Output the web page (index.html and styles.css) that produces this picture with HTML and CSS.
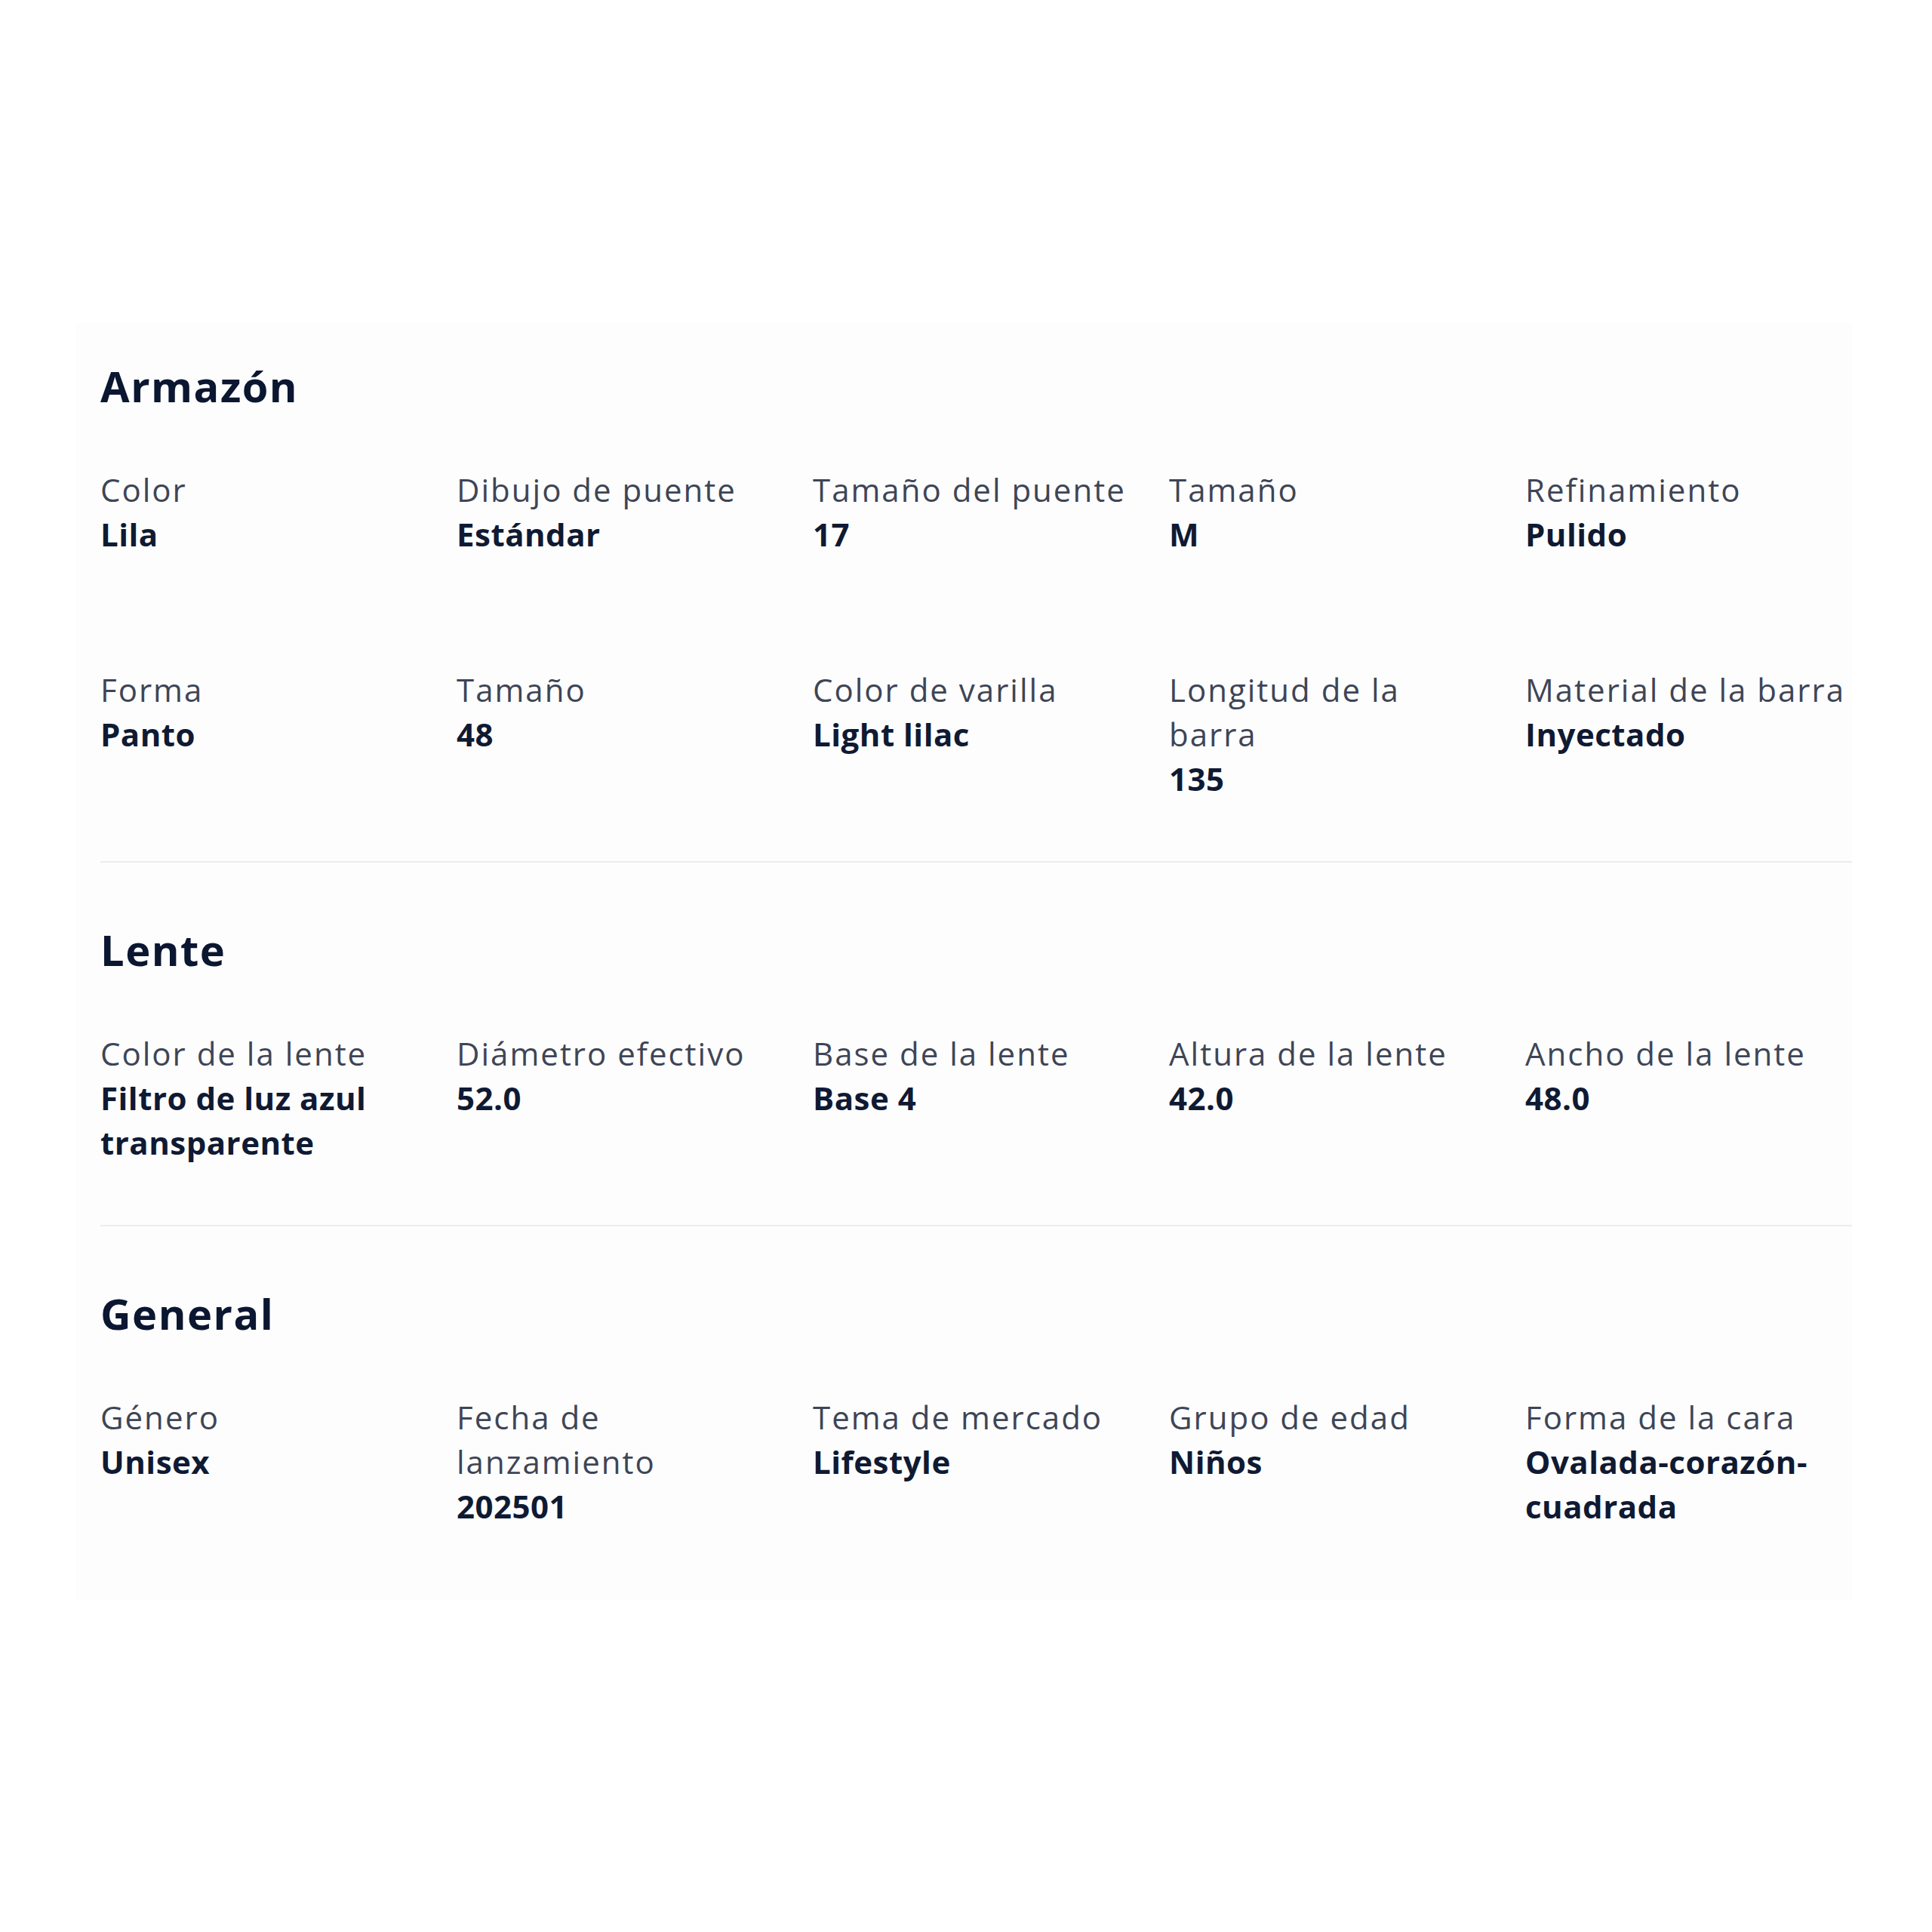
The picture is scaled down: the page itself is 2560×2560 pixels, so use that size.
FILE: index.html
```html
<!DOCTYPE html>
<html lang="es">
<head>
<meta charset="utf-8">
<title>Especificaciones</title>
<link rel="stylesheet" href="styles.css">
</head>
<body>
<div class="card">
  <section class="section">
    <h2 class="title">Armazón</h2>
    <div class="grid">
      <div class="item"><div class="label">Color</div><div class="value">Lila</div></div>
      <div class="item"><div class="label">Dibujo de puente</div><div class="value">Estándar</div></div>
      <div class="item"><div class="label">Tamaño del puente</div><div class="value">17</div></div>
      <div class="item"><div class="label">Tamaño</div><div class="value">M</div></div>
      <div class="item"><div class="label">Refinamiento</div><div class="value">Pulido</div></div>
      <div class="item"><div class="label">Forma</div><div class="value">Panto</div></div>
      <div class="item"><div class="label">Tamaño</div><div class="value">48</div></div>
      <div class="item"><div class="label">Color de varilla</div><div class="value">Light lilac</div></div>
      <div class="item"><div class="label">Longitud de la barra</div><div class="value">135</div></div>
      <div class="item"><div class="label">Material de la barra</div><div class="value">Inyectado</div></div>
    </div>
  </section>
  <section class="section">
    <h2 class="title">Lente</h2>
    <div class="grid">
      <div class="item"><div class="label">Color de la lente</div><div class="value">Filtro de luz azul transparente</div></div>
      <div class="item"><div class="label">Diámetro efectivo</div><div class="value">52.0</div></div>
      <div class="item"><div class="label">Base de la lente</div><div class="value">Base 4</div></div>
      <div class="item"><div class="label">Altura de la lente</div><div class="value">42.0</div></div>
      <div class="item"><div class="label">Ancho de la lente</div><div class="value">48.0</div></div>
    </div>
  </section>
  <section class="section last">
    <h2 class="title">General</h2>
    <div class="grid">
      <div class="item"><div class="label">Género</div><div class="value">Unisex</div></div>
      <div class="item"><div class="label">Fecha de lanzamiento</div><div class="value">202501</div></div>
      <div class="item"><div class="label">Tema de mercado</div><div class="value">Lifestyle</div></div>
      <div class="item"><div class="label">Grupo de edad</div><div class="value">Niños</div></div>
      <div class="item"><div class="label">Forma de la cara</div><div class="value">Ovalada-corazón-cuadrada</div></div>
    </div>
  </section>
</div>
</body>
</html>
```
FILE: styles.css
```css
html, body {
  margin: 0;
  padding: 0;
  background: #ffffff;
}

body {
  font-family: "Open Sans", "Liberation Sans", sans-serif;
  color: #0f1a33;
  padding-top: 428px;
  padding-left: 101px;
  padding-bottom: 400px;
}

.card {
  width: 2353px;
  box-sizing: border-box;
  background: #fdfdfd;
  padding: 0 0 0 32px;
}

.section {
  padding: 50px 0 80px;
  border-bottom: 2px solid #ececec;
}

.section + .section {
  padding-top: 82px;
}

.section.last {
  border-bottom: none;
  padding-bottom: 95px;
}

.title {
  margin: 0 0 74px;
  font-size: 56px;
  line-height: 67px;
  font-weight: 700;
  color: #0b1631;
  letter-spacing: 1.5px;
}

.grid {
  display: grid;
  grid-template-columns: repeat(5, 428px);
  column-gap: 44px;
  row-gap: 147px;
}

.item {
  font-size: 42px;
  line-height: 59px;
}

.label {
  color: #3e4556;
  font-weight: 400;
  letter-spacing: 2px;
}

.value {
  color: #0f1a33;
  font-weight: 700;
  letter-spacing: 0.5px;
}
```
